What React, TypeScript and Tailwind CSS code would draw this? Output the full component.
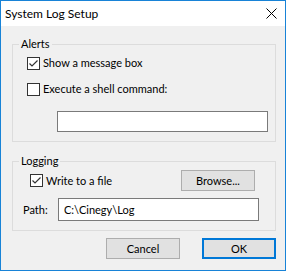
import React from "react";

const font = { fontFamily: 'Lato, "Noto Sans", sans-serif' };

function Check({ checked }: { checked: boolean }) {
  return (
    <div className="w-[13px] h-[13px] border border-[#333333] bg-white flex items-center justify-center shrink-0">
      {checked && (
        <svg width="11" height="11" viewBox="0 0 11 11">
          <path d="M1.5 5.5 L4 8 L9.5 2.5" fill="none" stroke="#333333" strokeWidth="1.2" />
        </svg>
      )}
    </div>
  );
}

function Button({ children, primary, className = "" }: { children: React.ReactNode; primary?: boolean; className?: string }) {
  return (
    <div
      className={
        "w-[74px] h-[21px] bg-[#e1e1e1] flex items-center justify-center text-[11px] text-black " +
        (primary ? "border-2 border-[#0078d7] " : "border border-[#adadad] ") +
        className
      }
    >
      {children}
    </div>
  );
}

export default function App() {
  return (
    <div className="w-[287px] h-[272px] bg-white" style={font}>
      <div className="w-[286px] h-[271px] border border-[#1883d7] bg-[#f0f0f0] flex flex-col">
        <div className="h-[25px] bg-white flex items-center justify-between pl-[4px] pr-[8px] shrink-0">
          <span className="text-[12px] leading-[16px] text-black">System Log Setup</span>
          <svg width="11" height="11" viewBox="0 0 11 11">
            <path d="M0.5 0.5 L10.5 10.5 M10.5 0.5 L0.5 10.5" stroke="#000" strokeWidth="1" />
          </svg>
        </div>
        <div className="flex flex-col pl-[11px] pr-[9px] text-[11px] leading-[16px] text-black">
          <fieldset className="mt-[10px] h-[106px] border border-[#dcdcdc] flex flex-col">
            <legend className="ml-[6px] px-[2px] leading-[16px]">Alerts</legend>
            <div className="mt-[3px] h-[16px] flex items-center pl-[14px] gap-[3px]">
              <Check checked />
              <span>Show a message box</span>
            </div>
            <div className="mt-[10px] h-[16px] flex items-center pl-[14px] gap-[3px]">
              <Check checked={false} />
              <span>Execute a shell command:</span>
            </div>
            <div className="mt-[14px] ml-[44px] w-[211px] h-[21px] bg-white border border-[#7a7a7a]" />
          </fieldset>
          <fieldset className="mt-[11px] h-[78px] border border-[#dcdcdc] flex flex-col">
            <legend className="ml-[6px] px-[2px] leading-[16px]">Logging</legend>
            <div className="mt-[1px] h-[21px] flex items-center pl-[17px] pr-[20px]">
              <Check checked />
              <span className="ml-[3px]">Write to a file</span>
              <Button className="ml-auto">Browse...</Button>
            </div>
            <div className="mt-[7px] h-[23px] flex items-center pl-[10px]">
              <span>Path:</span>
              <div className="ml-auto mr-[16px] w-[201px] h-[23px] bg-white border border-[#7a7a7a] flex items-center pl-[5px]">
                C:\Cinegy\Log
              </div>
            </div>
          </fieldset>
          <div className="mt-[7px] flex justify-end gap-[22px]">
            <Button>Cancel</Button>
            <Button primary>OK</Button>
          </div>
        </div>
      </div>
    </div>
  );
}
